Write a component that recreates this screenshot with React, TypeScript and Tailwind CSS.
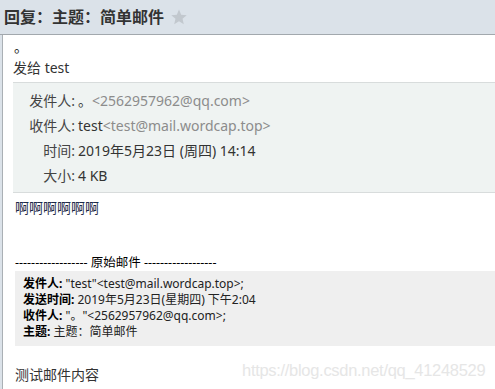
import React from 'react';

const infoRows = [
  { label: '发件人:', name: '。', addr: '<2562957962@qq.com>' },
  { label: '收件人:', name: 'test', addr: '<test@mail.wordcap.top>' },
  { label: '时间:', name: '2019年5月23日 (周四) 14:14', addr: '' },
  { label: '大小:', name: '4 KB', addr: '' },
];

const origRows = [
  { label: '发件人:', value: '"test"<test@mail.wordcap.top>;' },
  { label: '发送时间:', value: '2019年5月23日(星期四) 下午2:04' },
  { label: '收件人:', value: '"。"<2562957962@qq.com>;' },
  { label: '主题:', value: '主题：简单邮件' },
];

export default function App() {
  return (
    <div className="relative w-[495px] h-[389px] overflow-hidden bg-[#dbe2e9] font-['Noto_Sans','Noto_Sans_CJK_SC',sans-serif]">
      {/* Title bar */}
      <div className="h-[35px] border-b border-[#a2a8ad] flex items-center pl-[4px] gap-[6px]">
        <h1 className="text-[16px] font-bold text-[#333] leading-none">回复：主题：简单邮件</h1>
        <svg width="18" height="18" viewBox="0 0 24 24" className="mt-[-1px]">
          <path d="M12 2l2.9 6.9 7.4.6-5.6 4.9 1.7 7.3L12 17.8 5.6 21.7l1.7-7.3L1.7 9.5l7.4-.6z" fill="#c2c8ce" />
        </svg>
      </div>

      {/* Mail body */}
      <div className="ml-[2px] h-full bg-white border-l border-[#aab0b5] pl-[10px] pt-[5px] text-[14px] leading-[16px] text-[#333]">
        <div className="h-[14px] leading-[14px] pl-[1px] text-[#222]">。</div>
        <div className="mt-[6px]">发给 test</div>

        <div className="mt-[6px] bg-[#eff3f2] border-y border-[#d8dcdc] pt-[5px] pb-[4px]">
          {infoRows.map((r) => (
            <div key={r.label} className="flex h-[25px] items-center">
              <span className="w-[62px] text-right text-[#444]">{r.label}</span>
              <span className="ml-[3px] text-[#333]">{r.name}</span>
              {r.addr && <span className="text-[#8c8c8c]">{r.addr}</span>}
            </div>
          ))}
        </div>

        <div className="pl-[2px]">
          <div className="mt-[7px] text-[#1c2a48]">啊啊啊啊啊啊</div>

          <div className="mt-[39px] text-[12.5px] text-black whitespace-pre">------------------ 原始邮件 ------------------</div>

          <div className="bg-[#efefef] pl-[8px] pt-[5px] pb-[6px] text-[12px] leading-[16px] text-[#222]">
            {origRows.map((r) => (
              <div key={r.label}>
                <b className="text-black">{r.label}</b> {r.value}
              </div>
            ))}
          </div>

          <div className="mt-[21px] text-[#333]">测试邮件内容</div>
        </div>
      </div>

      {/* CSDN watermark */}
      <div className="absolute left-[242px] top-[360px] text-[16.5px] leading-[20px] text-[#e6e6e6] font-['Liberation_Sans',sans-serif] tracking-[-0.3px]">
        https://blog.csdn.net/qq_41248529
      </div>
    </div>
  );
}
